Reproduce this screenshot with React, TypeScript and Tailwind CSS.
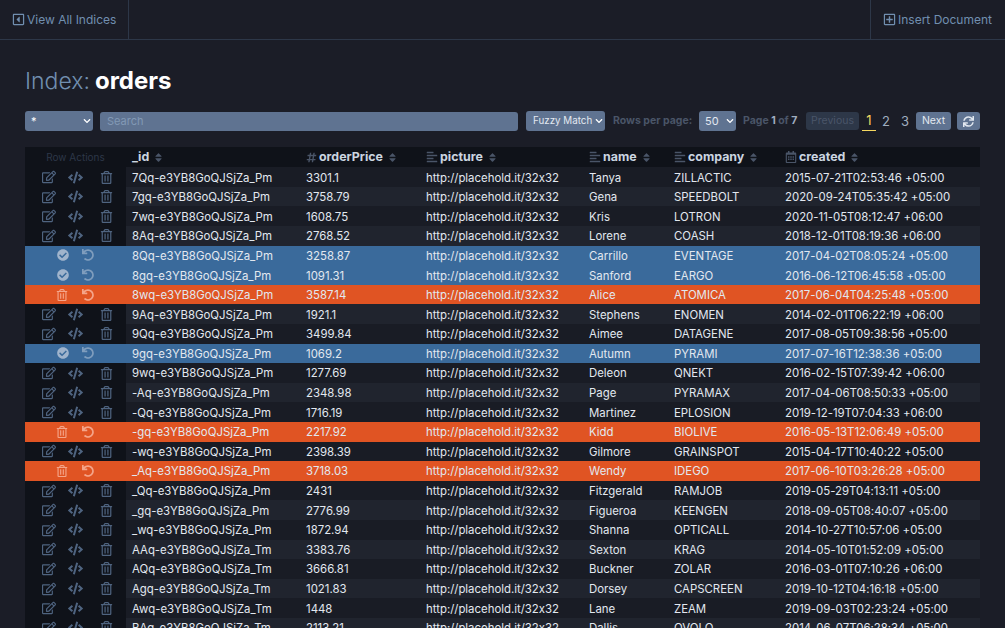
import React from "react";
import {
  FaRegEdit, FaCode, FaRegTrashAlt, FaCheckCircle, FaUndo, FaRegCaretSquareLeft, FaRegPlusSquare,
  FaSync, FaSort, FaHashtag, FaAlignLeft, FaRegCalendarAlt, FaChevronDown,
} from "react-icons/fa";

type Row = [string, string, string, string, string, ""|"b"|"o"];
const rows: Row[] = [
  ["7Qq-e3YB8GoQJSjZa_Pm","3301.1","Tanya","ZILLACTIC","2015-07-21T02:53:46 +05:00",""],
  ["7gq-e3YB8GoQJSjZa_Pm","3758.79","Gena","SPEEDBOLT","2020-09-24T05:35:42 +05:00",""],
  ["7wq-e3YB8GoQJSjZa_Pm","1608.75","Kris","LOTRON","2020-11-05T08:12:47 +06:00",""],
  ["8Aq-e3YB8GoQJSjZa_Pm","2768.52","Lorene","COASH","2018-12-01T08:19:36 +06:00",""],
  ["8Qq-e3YB8GoQJSjZa_Pm","3258.87","Carrillo","EVENTAGE","2017-04-02T08:05:24 +05:00","b"],
  ["8gq-e3YB8GoQJSjZa_Pm","1091.31","Sanford","EARGO","2016-06-12T06:45:58 +05:00","b"],
  ["8wq-e3YB8GoQJSjZa_Pm","3587.14","Alice","ATOMICA","2017-06-04T04:25:48 +05:00","o"],
  ["9Aq-e3YB8GoQJSjZa_Pm","1921.1","Stephens","ENOMEN","2014-02-01T06:22:19 +06:00",""],
  ["9Qq-e3YB8GoQJSjZa_Pm","3499.84","Aimee","DATAGENE","2017-08-05T09:38:56 +05:00",""],
  ["9gq-e3YB8GoQJSjZa_Pm","1069.2","Autumn","PYRAMI","2017-07-16T12:38:36 +05:00","b"],
  ["9wq-e3YB8GoQJSjZa_Pm","1277.69","Deleon","QNEKT","2016-02-15T07:39:42 +06:00",""],
  ["-Aq-e3YB8GoQJSjZa_Pm","2348.98","Page","PYRAMAX","2017-04-06T08:50:33 +05:00",""],
  ["-Qq-e3YB8GoQJSjZa_Pm","1716.19","Martinez","EPLOSION","2019-12-19T07:04:33 +06:00",""],
  ["-gq-e3YB8GoQJSjZa_Pm","2217.92","Kidd","BIOLIVE","2016-05-13T12:06:49 +05:00","o"],
  ["-wq-e3YB8GoQJSjZa_Pm","2398.39","Gilmore","GRAINSPOT","2015-04-17T10:40:22 +05:00",""],
  ["_Aq-e3YB8GoQJSjZa_Pm","3718.03","Wendy","IDEGO","2017-06-10T03:26:28 +05:00","o"],
  ["_Qq-e3YB8GoQJSjZa_Pm","2431","Fitzgerald","RAMJOB","2019-05-29T04:13:11 +05:00",""],
  ["_gq-e3YB8GoQJSjZa_Pm","2776.99","Figueroa","KEENGEN","2018-09-05T08:40:07 +05:00",""],
  ["_wq-e3YB8GoQJSjZa_Pm","1872.94","Shanna","OPTICALL","2014-10-27T10:57:06 +05:00",""],
  ["AAq-e3YB8GoQJSjZa_Tm","3383.76","Sexton","KRAG","2014-05-10T01:52:09 +05:00",""],
  ["AQq-e3YB8GoQJSjZa_Tm","3666.81","Buckner","ZOLAR","2016-03-01T07:10:26 +06:00",""],
  ["Agq-e3YB8GoQJSjZa_Tm","1021.83","Dorsey","CAPSCREEN","2019-10-12T04:16:18 +05:00",""],
  ["Awq-e3YB8GoQJSjZa_Tm","1448","Lane","ZEAM","2019-09-03T02:23:24 +05:00",""],
  ["BAq-e3YB8GoQJSjZa_Tm","2113.21","Dallis","OVOLO","2014-06-07T06:28:34 +05:00",""],
];

function Header({ w, icon, label }: { w: string; icon?: React.ReactNode; label: string }) {
  return (
    <div className={`${w} flex items-center shrink-0`}>
      {icon}
      <span className="font-bold text-[12.4px] text-[#cbd5e0] ml-[2px] first:ml-0 pt-px">{label}</span>
      <FaSort className="text-[#4a5568] text-[11px] ml-[4px]" />
    </div>
  );
}

function Caret() {
  return <FaChevronDown className="absolute right-[2px] top-[6px] text-[8px] text-white pointer-events-none" />;
}

export default function App() {
  return (
    <div className="h-[628px] w-[1005px] overflow-hidden bg-[#1b1d27] font-['Inter',sans-serif] text-[#e2e8f0] [font-feature-settings:'calt'_0]">
      <header className="h-10 flex justify-between border-b border-[#2d3748]">
        <div className="w-[129px] flex items-center gap-[2px] pl-3 border-r border-[#2d3748] text-[#718fb0] text-[12px]">
          <FaRegCaretSquareLeft className="text-[13px]" />
          <span>View All Indices</span>
        </div>
        <div className="w-[135px] flex items-center gap-[2px] pl-3 border-l border-[#2d3748] text-[#718fb0] text-[12px]">
          <FaRegPlusSquare className="text-[13px]" />
          <span>Insert Document</span>
        </div>
      </header>

      <main className="px-[25px]">
        <h1 className="mt-[26px] h-[30px] flex items-center gap-[5px] text-[24px] leading-[30px]">
          <span className="text-[#718fb0] font-light text-[23px]">Index:</span>
          <span className="font-bold text-white">orders</span>
        </h1>

        <div className="mt-[15px] h-[20px] flex items-center text-[11px]">
          <div className="relative w-[68px] h-[20px] shrink-0">
            <select defaultValue="*" className="appearance-none w-full h-full rounded-[3px] bg-[#5f7391] text-white px-[6px] text-[11px] outline-none">
              <option>*</option>
            </select>
            <Caret />
          </div>
          <input placeholder="Search" readOnly className="ml-[7px] w-[418px] h-[19px] rounded-[3px] bg-[#5f7391] px-[7px] text-[11px] placeholder:text-[#8299b5] outline-none" />
          <div className="relative ml-[8px] w-[79px] h-[20px] shrink-0">
            <select defaultValue="Fuzzy Match" className="appearance-none w-full h-full rounded-[3px] bg-[#5f7391] text-[#e2e8f0] pl-[7px] text-[9.8px] outline-none">
              <option>Fuzzy Match</option>
            </select>
            <Caret />
          </div>
          <span className="ml-[8px] w-[79px] shrink-0 font-bold text-[#4a5568] text-[10.5px] whitespace-nowrap">Rows per page:</span>
          <div className="relative ml-[7px] w-[37px] h-[20px] shrink-0">
            <select defaultValue="50" className="appearance-none w-full h-full rounded-[3px] bg-[#5f7391] text-[#e2e8f0] pl-[6px] text-[11px] outline-none">
              <option>50</option>
            </select>
            <Caret />
          </div>
          <span className="ml-[7px] w-[56px] shrink-0 font-bold text-[#4a5568] text-[10.5px] whitespace-nowrap">
            Page <span className="text-[#a0aec0]">1</span> of <span className="text-[#a0aec0]">7</span>
          </span>
          <button className="ml-[7px] w-[53px] h-[18px] rounded-[3px] bg-[#2d3748] text-[#4a5568] text-[10.5px]">Previous</button>
          <span className="ml-[3px] w-[14px] h-[19px] text-center text-[#f6d860] text-[13px] leading-[16px] border-b border-[#f6d860]">1</span>
          <span className="ml-[3px] w-[14px] text-center text-[#a0aec0] text-[13px] leading-[16px]">2</span>
          <span className="ml-[5px] w-[14px] text-center text-[#a0aec0] text-[13px] leading-[16px]">3</span>
          <button className="ml-[4px] w-[35px] h-[18px] rounded-[3px] bg-[#5f7391] text-[#e2e8f0] text-[10.5px]">Next</button>
          <button className="ml-[6px] w-[23px] h-[18px] rounded-[3px] bg-[#5f7391] flex items-center justify-center">
            <FaSync className="text-[11px] text-[#e2e8f0]" />
          </button>
        </div>

        <div className="mt-[16.3px] w-[955px]">
          <div className="h-[20px] flex items-center bg-[#0f1219]">
            <div className="w-[107px] shrink-0 text-center text-[10px] text-[#2d3748] pr-[6px]">Row Actions</div>
            <Header w="w-[174px]" label="_id" />
            <Header w="w-[120px]" label="orderPrice" icon={<FaHashtag className="text-[#4a5568] text-[11px]" />} />
            <Header w="w-[163px]" label="picture" icon={<FaAlignLeft className="text-[#4a5568] text-[12px]" />} />
            <Header w="w-[85px]" label="name" icon={<FaAlignLeft className="text-[#4a5568] text-[12px]" />} />
            <Header w="w-[111px]" label="company" icon={<FaAlignLeft className="text-[#4a5568] text-[12px]" />} />
            <Header w="w-[195px]" label="created" icon={<FaRegCalendarAlt className="text-[#4a5568] text-[12px]" />} />
          </div>
          {rows.map((r, i) => {
            const state = r[5];
            const bg = state === "b" ? "bg-[#3a6a9b]" : state === "o" ? "bg-[#e05423]" : i % 2 === 0 ? "bg-[#191c25]" : "bg-[#20242e]";
            return (
              <div key={r[0]} className={`h-[19.6px] flex items-center text-[11.4px] text-[#e2e8f0] whitespace-nowrap ${bg}`}>
                <div className={`w-[101px] h-full shrink-0 flex items-center ${state ? "" : "bg-[#0f1219]"}`}>
                  {state === "" && (
                    <div className="flex items-center text-[#4f6480]">
                      <FaRegEdit className="ml-[17px] text-[14px]" />
                      <FaCode className="ml-[12px] text-[15px]" />
                      <FaRegTrashAlt className="ml-[17px] text-[13px]" />
                    </div>
                  )}
                  {state === "b" && (
                    <div className="flex items-center text-[12px]">
                      <FaCheckCircle className="ml-[32px] text-[#a0b4cc]" />
                      <FaUndo className="ml-[13px] text-[#7f9dbd]" />
                    </div>
                  )}
                  {state === "o" && (
                    <div className="flex items-center text-[12px] text-[#f4a58a]">
                      <FaRegTrashAlt className="ml-[31px]" />
                      <FaUndo className="ml-[14px]" />
                    </div>
                  )}
                </div>
                <div className="w-[6px] shrink-0" />
                <div className="w-[174px] shrink-0 pt-[2px]">{r[0]}</div>
                <div className="w-[120px] shrink-0 pt-[2px]">{r[1]}</div>
                <div className="w-[163px] shrink-0 pt-[2px]">http://placehold.it/32x32</div>
                <div className="w-[85px] shrink-0 pt-[2px]">{r[2]}</div>
                <div className="w-[111px] shrink-0 pt-[2px]">{r[3]}</div>
                <div className="w-[195px] shrink-0 pt-[2px]">{r[4]}</div>
              </div>
            );
          })}
        </div>
      </main>
    </div>
  );
}
